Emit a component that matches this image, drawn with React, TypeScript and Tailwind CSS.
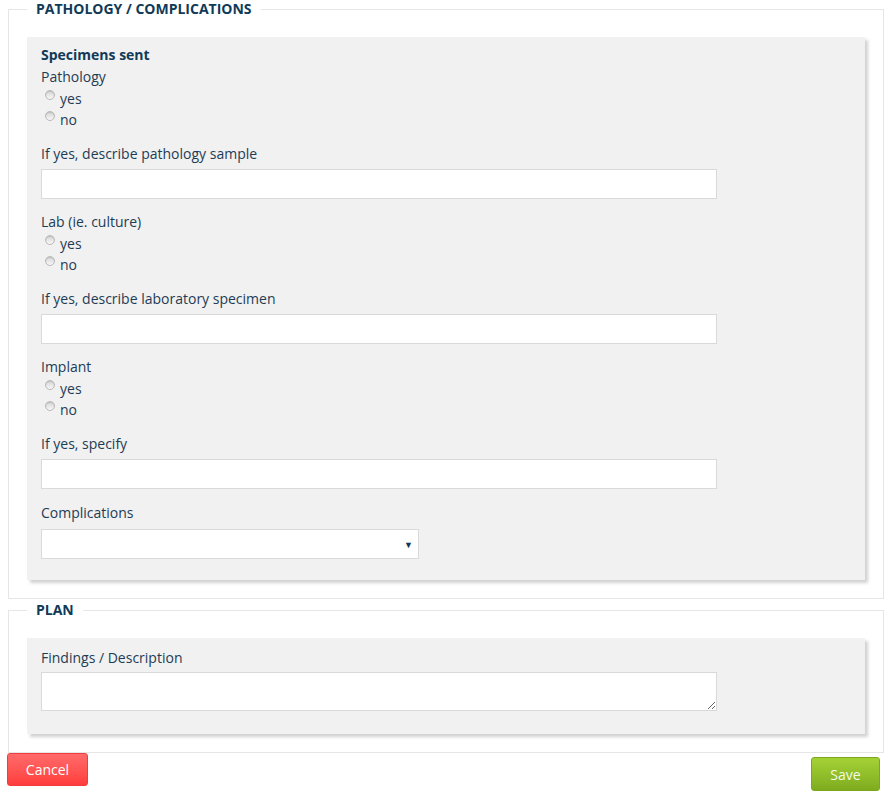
import React from "react";

const font = { fontFamily: '"Open Sans", "Noto Sans", sans-serif' };

function Label({ children }: { children: React.ReactNode }) {
  return <div className="text-[14px] leading-[22px] text-[#1d3c55]">{children}</div>;
}

function Radio({ name, label }: { name: string; label: string }) {
  return (
    <label className="flex items-start text-[14px] leading-[21px] text-[#1d3c55]">
      <input
        type="radio"
        name={name}
        className="appearance-none ml-[4px] mt-[2px] mr-[5px] w-[10px] h-[10px] rounded-full border border-[#b9b9b9] bg-gradient-to-b from-[#d6d6d6] to-[#f7f7f7] shadow-[inset_0_1px_1px_rgba(0,0,0,0.12)]"
      />
      <span>{label}</span>
    </label>
  );
}

function RadioGroup({ title, name }: { title: string; name: string }) {
  return (
    <div className="pb-[1px]">
      <Label>{title}</Label>
      <Radio name={name} label="yes" />
      <Radio name={name} label="no" />
    </div>
  );
}

function TextField({ title, extra = "" }: { title: string; extra?: string }) {
  return (
    <div className={extra}>
      <Label>{title}</Label>
      <input
        type="text"
        className="mt-[4px] block w-[676px] h-[30px] bg-white border border-[#d9d9d9] outline-none px-2 text-[14px]"
      />
    </div>
  );
}

export default function App() {
  return (
    <div className="bg-white w-[892px] h-[811px] px-2" style={font}>
      <fieldset className="border border-[#e6e6e6] px-[18px] pb-[18px]">
        <legend className="px-[9px] text-[14px] leading-[18px] font-bold uppercase text-[#103a57]">
          Pathology / Complications
        </legend>
        <div className="mt-[19px] bg-[#f1f1f1] shadow-[3px_3px_3px_rgba(0,0,0,0.18)] pl-[14px] pt-[7px] pb-[21px]">
          <div className="text-[14px] leading-[22px] font-bold text-[#103a57]">Specimens sent</div>
          <div className="flex flex-col gap-[12px]">
            <RadioGroup title="Pathology" name="pathology" />
            <TextField title="If yes, describe pathology sample" />
            <RadioGroup title="Lab (ie. culture)" name="lab" />
            <TextField title="If yes, describe laboratory specimen" />
            <RadioGroup title="Implant" name="implant" />
            <TextField title="If yes, specify" extra="pb-[1px]" />
            <div>
              <Label>Complications</Label>
              <div className="mt-[5px] w-[378px] h-[30px] bg-white border border-[#d9d9d9] flex items-center justify-end pr-[5px]">
                <span className="text-[9px] leading-none text-[#103a57]">▼</span>
              </div>
            </div>
          </div>
        </div>
      </fieldset>

      <fieldset className="mt-[2px] border border-[#e6e6e6] px-[18px] pb-[18px]">
        <legend className="px-[9px] text-[14px] leading-[18px] font-bold uppercase text-[#103a57]">
          Plan
        </legend>
        <div className="mt-[19px] bg-[#f1f1f1] shadow-[3px_3px_3px_rgba(0,0,0,0.18)] pl-[14px] pt-[9px] pb-[23px]">
          <Label>Findings / Description</Label>
          <textarea className="mt-[3px] block w-[676px] h-[39px] bg-white border border-[#d9d9d9] outline-none resize" />
        </div>
      </fieldset>

      <div className="flex justify-between items-start">
        <button className="-ml-px w-[81px] h-[33px] rounded-[3px] border border-[#f03c3c] bg-gradient-to-b from-[#ff6a6a] to-[#ff3c3c] text-white text-[14px]">
          Cancel
        </button>
        <button className="mt-[4px] mr-[4px] w-[69px] h-[34px] rounded-[3px] border border-[#7ca71d] bg-gradient-to-b from-[#a4d235] to-[#7fac1f] text-[#f4fae6] text-[14px]">
          Save
        </button>
      </div>
    </div>
  );
}
